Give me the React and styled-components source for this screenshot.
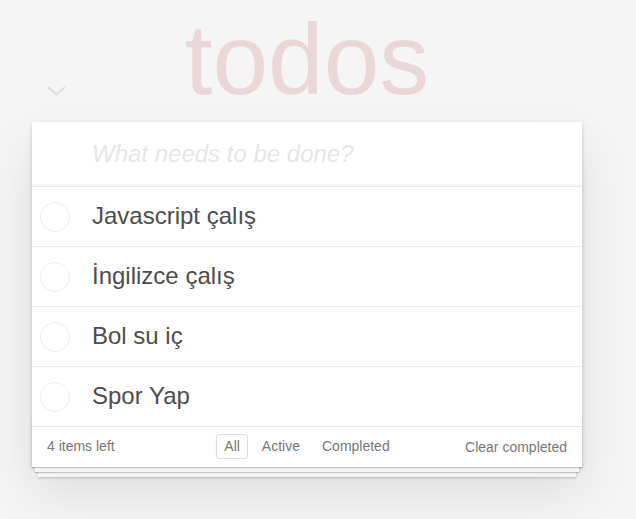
import React, { useState } from 'react'
import styled, { createGlobalStyle } from 'styled-components'

const GlobalStyle = createGlobalStyle`
  body {
    margin: 0;
    min-height: 100vh;
    background: #f5f5f5;
    font-family: "Liberation Sans", Arial, sans-serif;
    color: #4d4d4d;
    -webkit-font-smoothing: antialiased;
  }
`

const Page = styled.div`
  width: 550px;
  margin-left: 32px;
  padding: 9px 0 40px;
`

const Title = styled.h1`
  margin: 0 0 13px;
  font-size: 100px;
  line-height: 100px;
  font-weight: 100;
  text-align: center;
  color: rgba(175, 47, 47, 0.15);
`

const Card = styled.section`
  position: relative;
  background: #fff;
  box-shadow: 0 2px 4px 0 rgba(0, 0, 0, 0.2), 0 25px 50px 0 rgba(0, 0, 0, 0.1);
`

const ToggleAll = styled.button`
  position: absolute;
  top: -38px;
  left: 14px;
  width: 21px;
  height: 14px;
  padding: 0;
  border: none;
  background: none;
  display: flex;
  align-items: center;
  justify-content: center;
`

const NewTodo = styled.input`
  display: block;
  width: 100%;
  height: 64px;
  box-sizing: border-box;
  margin: 0;
  padding: 16px 16px 16px 60px;
  border: none;
  outline: none;
  font-family: inherit;
  font-size: 24px;
  color: #4d4d4d;
  background: transparent;
  box-shadow: inset 0 -2px 1px rgba(0, 0, 0, 0.03);

  &::placeholder {
    font-style: italic;
    color: #e6e6e6;
  }
`

const List = styled.ul`
  margin: 0;
  padding: 0;
  list-style: none;
  border-top: 1px solid #e6e6e6;
`

const Item = styled.li`
  display: flex;
  align-items: center;
  height: 59px;
  border-bottom: 1px solid #ededed;
  font-size: 24px;
  line-height: 1.2;

  &:last-child {
    border-bottom: none;
  }
`

const Check = styled.span`
  width: 30px;
  height: 30px;
  box-sizing: border-box;
  margin-left: 8px;
  border: 1px solid #ededed;
  border-radius: 50%;
`

const ItemText = styled.span`
  margin-left: 22px;
  color: #4d4d4d;
`

const Footer = styled.footer`
  position: relative;
  display: grid;
  grid-template-columns: 1fr auto 1fr;
  grid-template-rows: 20px;
  align-items: center;
  height: 20px;
  padding: 9px 15px 11px;
  border-top: 1px solid #e6e6e6;
  font-size: 14px;
  color: #777;

  &::before {
    content: '';
    position: absolute;
    left: 0;
    right: 0;
    bottom: 0;
    height: 50px;
    overflow: hidden;
    box-shadow: 0 1px 1px rgba(0, 0, 0, 0.2), 0 8px 0 -3px #f6f6f6,
      0 9px 1px -3px rgba(0, 0, 0, 0.2), 0 16px 0 -6px #f6f6f6,
      0 17px 2px -6px rgba(0, 0, 0, 0.2);
  }
`

const Count = styled.span`
  position: relative;
  line-height: 20px;
`

const Filters = styled.ul`
  position: relative;
  display: flex;
  margin: 0;
  padding: 0;
  list-style: none;
`

const Filter = styled.a`
  display: block;
  margin: 3px;
  padding: 3px 7px;
  border: 1px solid ${p => (p.$selected ? 'rgba(175, 47, 47, 0.2)' : 'transparent')};
  border-radius: 3px;
  color: inherit;
  text-decoration: none;
  line-height: 17px;
  cursor: pointer;
`

const Clear = styled.button`
  position: relative;
  justify-self: end;
  margin: 2px 0 0;
  padding: 0;
  border: none;
  background: none;
  font-family: inherit;
  font-size: 14px;
  line-height: 20px;
  color: #777;
  cursor: pointer;
`

const todos = ['Javascript çalış', 'İngilizce çalış', 'Bol su iç', 'Spor Yap']

export default function App() {
  const [filter, setFilter] = useState('All')

  return (
    <>
      <GlobalStyle />
      <Page>
        <Title>todos</Title>
        <Card>
          <ToggleAll aria-label="Mark all as complete">
            <svg width="19" height="10" viewBox="0 0 19 10">
              <polyline points="1,1 9.5,8.5 18,1" fill="none" stroke="#dedede" strokeWidth="1.7" />
            </svg>
          </ToggleAll>
          <NewTodo placeholder="What needs to be done?" />
          <List>
            {todos.map(t => (
              <Item key={t}>
                <Check />
                <ItemText>{t}</ItemText>
              </Item>
            ))}
          </List>
          <Footer>
            <Count>4 items left</Count>
            <Filters>
              {['All', 'Active', 'Completed'].map(f => (
                <li key={f}>
                  <Filter $selected={filter === f} onClick={() => setFilter(f)}>
                    {f}
                  </Filter>
                </li>
              ))}
            </Filters>
            <Clear>Clear completed</Clear>
          </Footer>
        </Card>
      </Page>
    </>
  )
}
